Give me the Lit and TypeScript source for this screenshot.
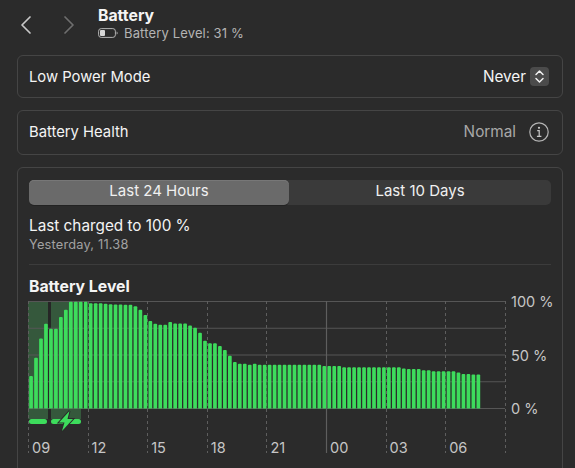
import { LitElement, html, css, svg } from "lit";
import { customElement } from "lit/decorators.js";

const Z0 = 385, ZH = 322;
const tops = [287,232,174,130,145,145,110,88,64,64,64,64,68,68,68,70,71,72,72,73,73,77,88,104,122,130,133,133,125,129,129,129,135,142,157,181,189,189,197,209,226,245,250,250,253,250,
  253,253,253,253,253,253,253,253,253,253,253,253,253,257,257,257,257,261,261,261,261,261,261,261,261,261,261,261,261,265,266,266,266,270,270,273,273,273,273,273,277,281,281,283,283];
const levels = tops.map((t) => (Z0 - t) / ZH);

const PX0 = 11, PX1 = 488, PTOP = 0, PBOT = 107; // plot coords inside the svg
const hours = ["09","12","15","18","21","00","03","06"];

@customElement("app-root")
export class AppRoot extends LitElement {
  static styles = css`
    :host { display: block; height: 468px; overflow: hidden; background: #2b2b2b; color: #f4f4f4;
      font-family: Inter, "Liberation Sans", sans-serif; font-size: 14.8px; box-sizing: border-box; padding: 8px 12px 0 17px; }
    .head { display: flex; align-items: center; height: 33px; margin-bottom: 14px; }
    .nav { display: block; width: 14px; height: 20px; fill: none; stroke-width: 1.7; stroke-linecap: round; stroke-linejoin: round; }
    .back { stroke: #c8c8c8; margin-left: 2px; }
    .fwd { stroke: #6e6e6e; margin-left: 29px; }
    .titles { margin-left: 22px; display: flex; flex-direction: column; gap: 1px; }
    .title { font-weight: 700; font-size: 15.8px; line-height: 16px; }
    .sub { display: flex; align-items: center; gap: 6px; color: #b4b4b4; font-size: 13px; line-height: 17px; letter-spacing: 0.15px; }
    .card { border: 1px solid #454545; border-radius: 6px; box-sizing: border-box; }
    .row { display: flex; align-items: center; justify-content: space-between; padding: 0 13px 0 11px; }
    .r1 { height: 43px; margin-bottom: 12px; }
    .r2 { height: 45px; margin-bottom: 12px; padding-bottom: 2px; }
    .right { display: flex; align-items: center; }
    .val { font-size: 15.3px; }
    .stepper { display: flex; width: 19px; height: 19px; margin-left: 4px; background: #4b4b4b; border-radius: 4px; align-items: center; justify-content: center; }
    .stepper svg { fill: none; stroke: #f0f0f0; stroke-width: 1.5; stroke-linecap: round; stroke-linejoin: round; }
    .muted { color: #a8a8a8; }
    .info { margin-left: 13px; fill: none; stroke: #b4b4b4; }
    .big { height: 330px; padding: 12px 11px 0 11px; }
    .seg { display: grid; grid-template-columns: 260px 1fr; height: 25px; background: #3a3a3a; border-radius: 5px; line-height: 22px; text-align: center; font-size: 15px; }
    .seg div { color: #f0f0f0; }
    .seg .on { background: #6a6a6a; border-radius: 5px; box-shadow: inset 0 1px 0 #777, 0 1px 0 #222; }
    .charged { margin-top: 11px; font-size: 15.3px; line-height: 20px; }
    .when { margin-top: 1px; font-size: 12.8px; line-height: 16px; color: #a2a2a2; letter-spacing: 0.2px; }
    hr { border: 0; border-top: 1px solid #3c3c3c; margin: 11px 0 0; }
    .lvl { margin-top: 13px; font-weight: 700; font-size: 15.8px; line-height: 17px; }
    .chart { display: block; margin: 6px 0 0 -12px; overflow: visible; }
    .chart text { font-family: Inter, "Liberation Sans", sans-serif; font-size: 14.5px; fill: #c6c6c6; }
    .grid { stroke: #565656; stroke-width: 1; }
    .dash { stroke: #5e5e5e; stroke-width: 1; stroke-dasharray: 3 3; }
    .solid { stroke: #5e5e5e; stroke-width: 1.2; }
    .shade { fill: #35583c; }
    .gap { fill: #262626; }
    .bar { fill: #3ddc5c; }
    .pill { fill: #3ddc5c; }
    .bolt { fill: #3ddc5c; stroke: #2b2b2b; stroke-width: 2; paint-order: stroke; }
  `;

  private chart() {
    const step = 59.6;
    const ys = [0, 26.75, 53.5, 80.25, 107];
    return html`<svg class="chart" width="546" height="160" viewBox="0 0 546 160">
      ${svg`
        <rect class="shade" x="11" y="0" width="20" height="118"></rect>
        <rect class="gap" x="31" y="0" width="3" height="118"></rect>
        <rect class="shade" x="34" y="0" width="30" height="118"></rect>
        ${ys.map((y) => svg`<line class="grid" x1=${PX0} x2=${PX1} y1=${y + 0.5} y2=${y + 0.5}></line>`)}
        ${[0,1,2,3,4,5,6,7,8].map((i) => {
          const x = Math.round(PX0 + i * step) + 0.5;
          return svg`<line class=${i === 5 ? "solid" : "dash"} x1=${x} x2=${x} y1=${PTOP} y2=${152}></line>`;
        })}
        ${levels.map((l, i) => {
          const h = l * PBOT;
          return svg`<path class="bar" d="M${PX0 + 1.2 + i * 4.97} ${PBOT + 0.5} v${-h + 1} q0 -1 1 -1 h1.7 q1 0 1 1 v${h - 1} z"></path>`;
        })}
        <rect class="pill" x="12" y="118" width="18" height="5" rx="2.5"></rect>
        <rect class="pill" x="34" y="118" width="30" height="5" rx="2.5"></rect>
        <path class="bolt" d="M52.5 110 L42 121.5 H47.5 L45 130 L56 118 H50.5 Z"></path>
        ${hours.map((h, i) => svg`<text x=${PX0 + 4 + i * step} y="152">${h}</text>`)}
        <text x="494" y="5.5">100 %</text>
        <text x="494" y="60">50 %</text>
        <text x="494" y="113">0 %</text>
      `}
    </svg>`;
  }

  render() {
    return html`
      <div class="head">
        <svg class="nav back" viewBox="0 0 14 20"><path d="M11 2 3 10l8 8"></path></svg>
        <svg class="nav fwd" viewBox="0 0 14 20"><path d="M3 2l8 8-8 8"></path></svg>
        <div class="titles">
          <div class="title">Battery</div>
          <div class="sub">
            <svg width="20" height="10" viewBox="0 0 20 10">
              <rect x="0.6" y="0.6" width="16.8" height="8.8" rx="2.6" fill="none" stroke="#b4b4b4" stroke-width="1"></rect>
              <rect x="2" y="2" width="5" height="6" rx="1" fill="#d8d8d8"></rect>
              <path d="M18.6 3.4c.8.3 1 .9 1 1.6s-.2 1.3-1 1.6z" fill="#b4b4b4"></path>
            </svg>
            <span>Battery Level: 31 %</span>
          </div>
        </div>
      </div>
      <div class="card row r1">
        <span>Low Power Mode</span>
        <div class="right">
          <span class="val">Never</span>
          <span class="stepper"><svg width="11" height="15" viewBox="0 0 11 15"><path d="M2 5.5 5.5 2 9 5.5M2 9.5 5.5 13 9 9.5"></path></svg></span>
        </div>
      </div>
      <div class="card row r2">
        <span>Battery Health</span>
        <div class="right">
          <span class="val muted">Normal</span>
          <svg class="info" width="20" height="20" viewBox="0 0 20 20">
            <circle cx="10" cy="10" r="9.2" stroke-width="1.2"></circle>
            <circle cx="10" cy="5.8" r="1.1" fill="#c8c8c8" stroke="none"></circle>
            <path d="M8.2 8.6H10.2V14.3M7.9 14.4H12.4" stroke="#c8c8c8" stroke-width="1.2"></path>
          </svg>
        </div>
      </div>
      <div class="card big">
        <div class="seg"><div class="on">Last 24 Hours</div><div>Last 10 Days</div></div>
        <div class="charged">Last charged to 100 %</div>
        <div class="when">Yesterday, 11.38</div>
        <hr />
        <div class="lvl">Battery Level</div>
        ${this.chart()}
      </div>
    `;
  }
}
